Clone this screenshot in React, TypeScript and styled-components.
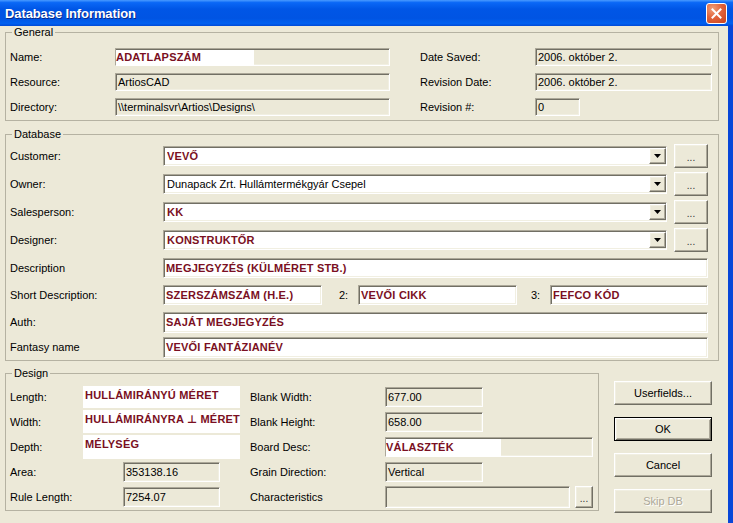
import React from 'react';
import styled, { createGlobalStyle, css } from 'styled-components';

const face = '#ECE9D8';

const GlobalStyle = createGlobalStyle`
  html, body {
    margin: 0;
    padding: 0;
    background: ${face};
  }
  body {
    font-family: 'Liberation Sans', Arial, sans-serif;
    font-size: 11px;
    color: #000;
  }
`;

const sunken = css`
  border: 1px solid;
  border-color: #aca899 #ffffff #ffffff #aca899;
  box-shadow: inset 1px 1px 0 #716f64, inset -1px -1px 0 #f1efe2;
`;

const raised = css`
  border: 1px solid;
  border-color: #ffffff #716f64 #716f64 #ffffff;
  box-shadow: inset -1px -1px 0 #aca899, inset 1px 1px 0 #f1efe2;
  background: ${face};
`;

const Window = styled.div`
  width: 733px;
  height: 523px;
  overflow: hidden;
  display: flex;
  flex-direction: column;
`;

const TitleBar = styled.div`
  flex: none;
  height: 26px;
  display: flex;
  align-items: center;
  justify-content: space-between;
  padding: 0 6px 0 5px;
  box-sizing: border-box;
  background: linear-gradient(
    to bottom,
    #4a9bff 0%,
    #0a68f6 10%,
    #0056e6 35%,
    #0054e3 70%,
    #0060f0 90%,
    #004ad6 100%
  );
`;

const Title = styled.span`
  color: #fff;
  font-family: 'Liberation Sans', Arial, sans-serif;
  font-weight: bold;
  font-size: 13px;
  letter-spacing: -0.1px;
  text-shadow: 1px 1px 0 #0a2a8a;
`;

const CloseButton = styled.div`
  width: 21px;
  height: 21px;
  box-sizing: border-box;
  border: 1px solid #fff;
  border-radius: 3px;
  background: radial-gradient(circle at 30% 25%, #f0a07a 0%, #e2643c 45%, #c8411c 100%);
  display: flex;
  align-items: center;
  justify-content: center;
  margin-top: 1px;
`;

const Body = styled.div`
  flex: 1;
  background: ${face};
  border-right: 5px solid #0846d8;
  padding-left: 5px;
  display: flex;
  flex-direction: column;
`;

const Group = styled.fieldset<{ $w: number; $pr: number; $pt: number; $mt: number }>`
  box-sizing: border-box;
  width: ${p => p.$w}px;
  min-width: 0;
  margin: ${p => p.$mt}px 0 0 0;
  padding: ${p => p.$pt}px ${p => p.$pr}px 1px 4px;
  border: 1px solid #b5b2a2;
`;

const Legend = styled.legend`
  padding: 0 2px;
  margin-left: 2px;
  font-size: 11px;
  line-height: 13px;
  color: #000;
`;

const Label = styled.span`
  white-space: nowrap;
  font-size: 11px;
`;

const Sep = styled.span<{ $w: number; $pl: number }>`
  flex: none;
  width: ${p => p.$w}px;
  padding-left: ${p => p.$pl}px;
  box-sizing: border-box;
  font-size: 11px;
`;

const Field = styled.div<{ $w?: number; $h?: number; $white?: boolean; $ml?: number }>`
  ${sunken}
  box-sizing: border-box;
  flex: ${p => (p.$w ? 'none' : '1')};
  width: ${p => (p.$w ? `${p.$w}px` : 'auto')};
  height: ${p => p.$h ?? 20}px;
  margin-left: ${p => p.$ml ?? 0}px;
  background: ${p => (p.$white ? '#fff' : face)};
  display: flex;
  align-items: center;
  padding: 0 2px;
  overflow: hidden;
  white-space: nowrap;
`;

const Highlight = styled.span<{ $w: number }>`
  align-self: stretch;
  width: ${p => p.$w}px;
  margin: 1px 0 0 -1px;
  padding-left: 1px;
  background: #fff;
  display: flex;
  align-items: center;
`;

const Mark = styled.span`
  font-family: 'Liberation Sans', Arial, 'DejaVu Sans', sans-serif;
  font-weight: bold;
  font-size: 11px;
  color: #7a0f22;
  letter-spacing: 0.2px;
`;

const WhiteBox = styled.div<{ $h: number }>`
  width: 157px;
  height: ${p => p.$h}px;
  background: #fff;
  padding: 3px 0 0 2px;
  box-sizing: border-box;
  white-space: nowrap;
`;

const Row = styled.div`
  display: flex;
  align-items: center;
`;

const Combo = styled.div`
  ${sunken}
  box-sizing: border-box;
  flex: 1;
  height: 20px;
  background: #fff;
  display: flex;
  align-items: center;
  padding: 0 0 0 3px;
  gap: 2px;
`;

const ComboText = styled.span`
  flex: 1;
  white-space: nowrap;
  overflow: hidden;
`;

const DropButton = styled.span`
  ${raised}
  flex: none;
  box-sizing: border-box;
  width: 17px;
  height: 16px;
  display: flex;
  align-items: center;
  justify-content: center;
`;

const DotsButton = styled.button<{ $w: number; $h: number }>`
  ${raised}
  flex: none;
  box-sizing: border-box;
  width: ${p => p.$w}px;
  height: ${p => p.$h}px;
  padding: 3px 0 0 0;
  font-family: 'Liberation Sans', Arial, sans-serif;
  font-size: 10px;
  color: #333;
  display: flex;
  align-items: center;
  justify-content: center;
`;

const GeneralGrid = styled.div`
  display: grid;
  grid-template-columns: 105px 305px 115px 177px;
  grid-auto-rows: 25px;
  align-items: center;
`;

const DbGrid = styled.div`
  display: grid;
  grid-template-columns: 153px 545px;
  grid-template-rows: 28px 28px 28px 28px 27px 28px 26px 24px;
  align-items: center;
`;

const DesignGrid = styled.div`
  display: grid;
  grid-template-columns: 73px 167px 135px 208px;
  grid-auto-rows: 25px;
  align-items: center;
`;

const BottomRow = styled.div`
  display: flex;
  align-items: flex-start;
`;

const ButtonColumn = styled.div`
  margin-left: 15px;
  padding-top: 20px;
  display: flex;
  flex-direction: column;
  gap: 12px;
`;

const PushButton = styled.button<{ $default?: boolean }>`
  ${raised}
  box-sizing: border-box;
  width: 98px;
  height: 24px;
  padding: 0;
  font-family: 'Liberation Sans', Arial, sans-serif;
  font-size: 11px;
  color: #000;
  ${p =>
    p.$default &&
    css`
      border: 1px solid #000;
      box-shadow: inset 1px 1px 0 #fff, inset -1px -1px 0 #716f64, inset 2px 2px 0 #f1efe2,
        inset -2px -2px 0 #aca899;
    `}
  &:disabled {
    color: #aca899;
    text-shadow: 1px 1px 0 #fff;
  }
`;

const Arrow = () => (
  <svg width="7" height="4" viewBox="0 0 7 4">
    <polygon points="0,0 7,0 3.5,4" fill="#000" />
  </svg>
);

const ComboBox: React.FC<{ children: React.ReactNode }> = ({ children }) => (
  <Row>
    <Combo>
      <ComboText>{children}</ComboText>
      <DropButton>
        <Arrow />
      </DropButton>
    </Combo>
    <DotsButton $w={34} $h={24} style={{ marginLeft: 7 }}>
      ...
    </DotsButton>
  </Row>
);

export default function App() {
  return (
    <>
      <GlobalStyle />
      <Window>
        <TitleBar>
          <Title>Database Information</Title>
          <CloseButton>
            <svg width="11" height="11" viewBox="0 0 11 11">
              <path d="M1.5 1.5 L9.5 9.5 M9.5 1.5 L1.5 9.5" stroke="#fff" strokeWidth="2" strokeLinecap="square" />
            </svg>
          </CloseButton>
        </TitleBar>
        <Body>
          <Group $w={714} $pr={6} $pt={5} $mt={0}>
            <Legend>General</Legend>
            <GeneralGrid>
              <Label>Name:</Label>
              <Field $w={275} $h={18} style={{ padding: 0 }}>
                <Highlight $w={138}>
                  <Mark>ADATLAPSZÁM</Mark>
                </Highlight>
              </Field>
              <Label>Date Saved:</Label>
              <Field $w={177} $h={18}>2006. október 2.</Field>

              <Label>Resource:</Label>
              <Field $w={275} $h={18}>ArtiosCAD</Field>
              <Label>Revision Date:</Label>
              <Field $w={177} $h={18}>2006. október 2.</Field>

              <Label>Directory:</Label>
              <Field $w={275} $h={18}>\\terminalsvr\Artios\Designs\</Field>
              <Label>Revision #:</Label>
              <Field $w={45} $h={18}>0</Field>
            </GeneralGrid>
          </Group>

          <Group $w={714} $pr={10} $pt={1} $mt={7}>
            <Legend>Database</Legend>
            <DbGrid>
              <Label>Customer:</Label>
              <ComboBox>
                <Mark>VEVŐ</Mark>
              </ComboBox>
              <Label>Owner:</Label>
              <ComboBox>Dunapack Zrt. Hullámtermékgyár Csepel</ComboBox>
              <Label>Salesperson:</Label>
              <ComboBox>
                <Mark>KK</Mark>
              </ComboBox>
              <Label>Designer:</Label>
              <ComboBox>
                <Mark>KONSTRUKTŐR</Mark>
              </ComboBox>

              <Label>Description</Label>
              <Field $white>
                <Mark>MEGJEGYZÉS (KÜLMÉRET STB.)</Mark>
              </Field>

              <Label>Short Description:</Label>
              <Row>
                <Field $w={159} $white>
                  <Mark>SZERSZÁMSZÁM (H.E.)</Mark>
                </Field>
                <Sep $w={36} $pl={17}>2:</Sep>
                <Field $w={159} $white>
                  <Mark>VEVŐI CIKK</Mark>
                </Field>
                <Sep $w={33} $pl={14}>3:</Sep>
                <Field $white>
                  <Mark>FEFCO KÓD</Mark>
                </Field>
              </Row>

              <Label>Auth:</Label>
              <Field $white $h={21}>
                <Mark>SAJÁT MEGJEGYZÉS</Mark>
              </Field>

              <Label>Fantasy name</Label>
              <Field $white $h={21}>
                <Mark>VEVŐI FANTÁZIANÉV</Mark>
              </Field>
            </DbGrid>
          </Group>

          <BottomRow>
            <Group $w={594} $pr={5} $pt={4} $mt={6}>
              <Legend>Design</Legend>
              <DesignGrid>
                <Label>Length:</Label>
                <WhiteBox $h={22}>
                  <Mark>HULLÁMIRÁNYÚ MÉRET</Mark>
                </WhiteBox>
                <Label>Blank Width:</Label>
                <Field $w={98}>677.00</Field>

                <Label>Width:</Label>
                <WhiteBox $h={23}>
                  <Mark>HULLÁMIRÁNYRA ⊥ MÉRET</Mark>
                </WhiteBox>
                <Label>Blank Height:</Label>
                <Field $w={98}>658.00</Field>

                <Label>Depth:</Label>
                <WhiteBox $h={24}>
                  <Mark>MÉLYSÉG</Mark>
                </WhiteBox>
                <Label>Board Desc:</Label>
                <Field $w={208} style={{ padding: 0 }}>
                  <Highlight $w={115}>
                    <Mark>VÁLASZTÉK</Mark>
                  </Highlight>
                </Field>

                <Label>Area:</Label>
                <Field $w={97} $ml={40}>353138.16</Field>
                <Label>Grain Direction:</Label>
                <Field $w={98}>Vertical</Field>

                <Label>Rule Length:</Label>
                <Field $w={97} $ml={40}>7254.07</Field>
                <Label>Characteristics</Label>
                <Row>
                  <Field $w={185} $h={22} />
                  <DotsButton $w={18} $h={22} style={{ marginLeft: 5 }}>
                    ...
                  </DotsButton>
                </Row>
              </DesignGrid>
            </Group>
            <ButtonColumn>
              <PushButton>Userfields...</PushButton>
              <PushButton $default>OK</PushButton>
              <PushButton>Cancel</PushButton>
              <PushButton disabled>Skip DB</PushButton>
            </ButtonColumn>
          </BottomRow>
        </Body>
      </Window>
    </>
  );
}
